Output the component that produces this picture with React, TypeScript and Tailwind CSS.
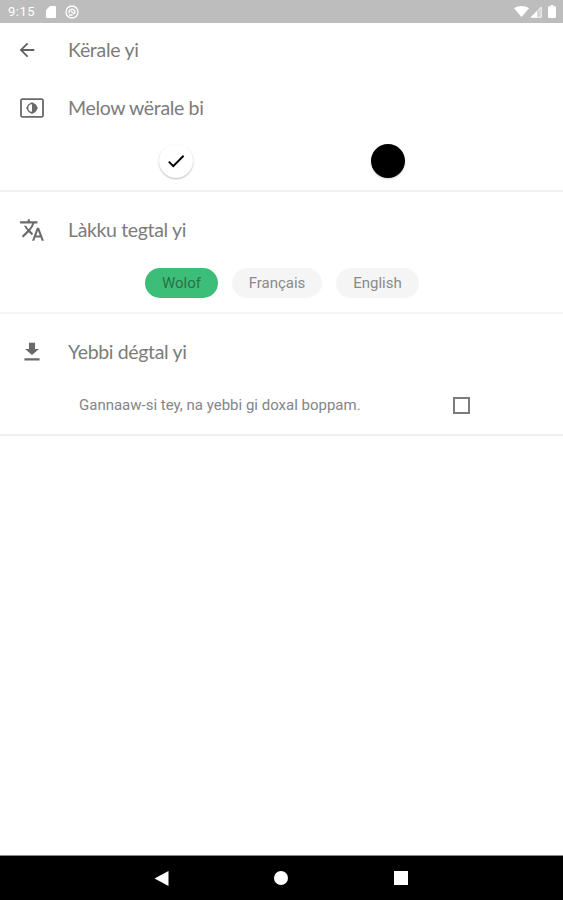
import React, { useState } from 'react';
import { MdArrowBack, MdCheck, MdTranslate } from 'react-icons/md';

const languages = [
    { id: 'wo', label: 'Wolof', width: 'w-[73px]' },
    { id: 'fr', label: 'Français', width: 'w-[90px]' },
    { id: 'en', label: 'English', width: 'w-[83px]' },
];

const StatusBar: React.FC = () => (
    <div className="h-[23px] shrink-0 bg-[#bdbdbd] flex items-center justify-between pl-2 pr-[7px] text-white">
        <div className="flex items-center">
            <span className="w-[38px] text-[13px] leading-none tracking-[0.5px]">9:15</span>
            {/* SD card */}
            <svg className="w-[10px] h-[12px]" viewBox="0 0 10 12" fill="currentColor">
                <path d="M4 0h5a1 1 0 0 1 1 1v10a1 1 0 0 1-1 1H1a1 1 0 0 1-1-1V4z" />
            </svg>
            <svg className="ml-[9px] w-[14px] h-[14px]" viewBox="0 0 14 14" fill="none" stroke="currentColor">
                <circle cx="7" cy="7" r="6" strokeWidth="1.3" />
                <path d="M4.2 8.2a3 3 0 1 1 5.4.3M4 10h3.5M5.8 5.8l3.6 3.4" strokeWidth="1.3" />
            </svg>
        </div>
        <div className="flex items-center">
            <svg className="w-[15px] h-[11px]" viewBox="0 0 15 11" fill="currentColor">
                <path d="M7.5 11 0 2.2C4.3-.7 10.7-.7 15 2.2z" />
            </svg>
            <svg className="ml-px w-[12px] h-[12px]" viewBox="0 0 12 12">
                <path d="M11.3 1v10.3H1z" fill="#fff" fillOpacity=".35" stroke="#fff" strokeWidth=".8" />
                <path d="M7 5.2v6.3H.8z" fill="#fff" />
            </svg>
            <svg className="ml-[6px] w-[8px] h-[13px]" viewBox="0 0 8 13" fill="currentColor">
                <path d="M2.5 0h3v1.3H7a1 1 0 0 1 1 1V12a1 1 0 0 1-1 1H1a1 1 0 0 1-1-1V2.3a1 1 0 0 1 1-1h1.5z" />
            </svg>
        </div>
    </div>
);

const SectionTitle: React.FC<{ icon: React.ReactNode; title: string }> = ({ icon, title }) => (
    <div className="h-[58px] flex items-center">
        <div className="w-[68px] pl-[19px] text-[#6a6a6a]">{icon}</div>
        <h2 className="font-['Lato',sans-serif] text-[19.5px] leading-none tracking-[-0.35px] text-[#7c7c7c]">{title}</h2>
    </div>
);

export default function App() {
    const [theme, setTheme] = useState('light');
    const [language, setLanguage] = useState('wo');
    const [autoDownload, setAutoDownload] = useState(false);

    return (
        <div className="w-[563px] h-[900px] flex flex-col bg-white overflow-hidden font-['Roboto',sans-serif]">
            <StatusBar />

            {/* App bar */}
            <header className="h-[53px] shrink-0 flex items-center">
                <button className="w-[68px] pl-[16px] text-[#616161]" aria-label="Back">
                    <MdArrowBack size={22} />
                </button>
                <h1 className="font-['Lato',sans-serif] text-[19.5px] leading-none tracking-[-0.3px] text-[#7c7c7c]">Kërale yi</h1>
            </header>

            <main className="flex-1">
                {/* Theme */}
                <section className="h-[116px] pt-[3px] border-b-2 border-[#f0f0f0]">
                    <SectionTitle
                        icon={
                            <svg className="size-[26px]" viewBox="0 0 24 24" fill="currentColor">
                                <path d="M21 3H3c-1.1 0-2 .9-2 2v14c0 1.1.9 2 2 2h18c1.1 0 2-.9 2-2V5c0-1.1-.9-2-2-2zm.3 16.3H2.7V4.7h18.6z" />
                                <circle cx="12" cy="12" r="4.1" fill="none" stroke="currentColor" strokeWidth="1.4" />
                                <path d="M12 8v8a4 4 0 0 0 0-8z" />
                                <path d="m12 6.4 1.3 1.3h-2.6zM12 17.6l1.3-1.3h-2.6zM6.4 12l1.3-1.3v2.6zM17.6 12l-1.3-1.3v2.6z" />
                            </svg>
                        }
                        title="Melow wërale bi"
                    />
                    <div className="flex pl-[159px] pt-[7px] gap-[178px]">
                        <button
                            onClick={() => setTheme('light')}
                            aria-label="Light"
                            className="size-[34px] rounded-full bg-white shadow-[0_1px_2px_rgba(0,0,0,0.28)] flex items-center justify-center text-black"
                        >
                            {theme === 'light' && <MdCheck size={22} />}
                        </button>
                        <button
                            onClick={() => setTheme('dark')}
                            aria-label="Dark"
                            className="size-[34px] rounded-full bg-black shadow-[0_1px_2px_rgba(0,0,0,0.2)] flex items-center justify-center text-white"
                        >
                            {theme === 'dark' && <MdCheck size={22} />}
                        </button>
                    </div>
                </section>

                {/* Language */}
                <section className="h-[122px] pt-[9px] border-b-2 border-[#f5f5f5]">
                    <SectionTitle icon={<MdTranslate size={26} />} title="Làkku tegtal yi" />
                    <div className="flex pl-[145px] pt-[9px] gap-[14px]">
                        {languages.map((l) => (
                            <button
                                key={l.id}
                                onClick={() => setLanguage(l.id)}
                                className={`${l.width} h-[30px] rounded-full text-[15px] leading-none ${
                                    language === l.id ? 'bg-[#3dbe78] text-[#2a7048]' : 'bg-[#f5f5f5] text-[#8a8a8a]'
                                }`}
                            >
                                {l.label}
                            </button>
                        ))}
                    </div>
                </section>

                {/* Downloads */}
                <section className="h-[122px] pt-[9px] border-b-2 border-[#f0f0f0]">
                    <SectionTitle
                        icon={
                            <svg className="size-[26px]" viewBox="0 0 24 24" fill="currentColor">
                                <path d="M18.4 9.2h-3.6V3.4H9.2v5.8H5.6l6.4 5.6zM5 17.8v2h14v-2z" />
                            </svg>
                        }
                        title="Yebbi dégtal yi"
                    />
                    <div className="flex items-center h-[48px]">
                        <span className="w-[374px] pl-[79px] text-[15px] leading-none whitespace-nowrap text-[#858585]">
                            Gannaaw-si tey, na yebbi gi doxal boppam.
                        </span>
                        <button
                            role="checkbox"
                            aria-checked={autoDownload}
                            aria-label="Auto download"
                            onClick={() => setAutoDownload(!autoDownload)}
                            className="ml-[79px] size-[17px] border-2 border-[#7c7c7c] flex items-center justify-center"
                        >
                            {autoDownload && <MdCheck size={13} />}
                        </button>
                    </div>
                </section>
            </main>

            {/* Navigation bar */}
            <nav className="h-[45px] shrink-0 border-t border-[#8a8a8a] bg-black flex items-center pl-[154px] gap-[105px]">
                <svg className="size-[15px]" viewBox="0 0 15 15" fill="#fff">
                    <path d="M.5 7.5 14.5 0v15z" />
                </svg>
                <span className="size-[14px] rounded-full bg-white" />
                <span className="ml-px size-[14px] bg-white" />
            </nav>
        </div>
    );
}
